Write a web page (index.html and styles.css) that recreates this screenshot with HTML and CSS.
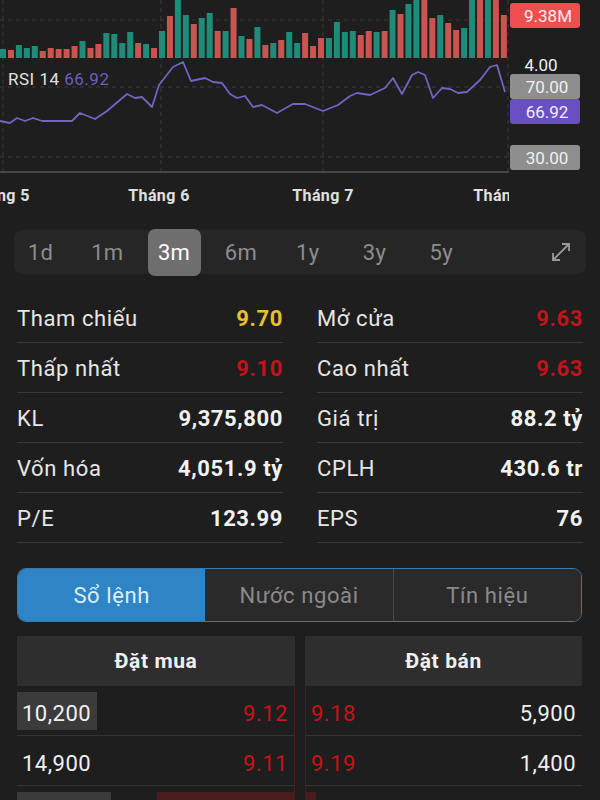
FILE: index.html
```html
<!DOCTYPE html>
<html lang="vi">
<head>
    <meta charset="UTF-8">
    <meta name="viewport" content="width=device-width, initial-scale=1.0">
    <title>Chi tiết cổ phiếu</title>
    <link rel="stylesheet" href="styles.css">
</head>
<body>
    <svg class="chart" width="600" height="210" viewBox="0 0 600 210">
        <defs>
            <clipPath id="plotClip"><rect x="0" y="0" width="509" height="210"/></clipPath>
        </defs>
        <g clip-path="url(#plotClip)">
            <g class="grid">
                <line x1="3" y1="0" x2="3" y2="172"/>
                <line x1="161" y1="0" x2="161" y2="172"/>
                <line x1="323" y1="0" x2="323" y2="172"/>
                <line x1="508" y1="0" x2="508" y2="174"/>
                <line x1="0" y1="20" x2="508" y2="20"/>
                <line x1="0" y1="87" x2="508" y2="87"/>
                <line x1="0" y1="157" x2="508" y2="157"/>
            </g>
            <g id="bars"></g>
            <line class="baseline" x1="0" y1="172" x2="509" y2="172"/>
            <polyline class="rsi" points="0,121 10,123 17,118 25,121 33,118 42,121 72,121 80,113 95,119 107,111 127,94 135,98 142,97 152,107 159,85 173,67 183,62 191,81 205,78 213,82 222,83 230,94 237,98 245,96 253,107 262,105 277,113 293,104 305,104 323,111 338,105 350,96 357,93 370,95 385,88 393,78 402,94 412,75 418,72 425,75 433,98 442,88 450,89 458,93 467,92 480,80 490,67 497,65 505,92"/>
            <text class="rsi-label" x="8" y="85">RSI 14 <tspan class="rsi-value">66.92</tspan></text>
            <text class="month" x="-1" y="201">Tháng 5</text>
            <text class="month" x="159" y="201">Tháng 6</text>
            <text class="month" x="323" y="201">Tháng 7</text>
            <text class="month" x="504" y="201">Tháng 8</text>
        </g>
        <g class="axis">
            <rect class="tag-vol" x="510" y="3" width="70" height="25" rx="3"/>
            <text x="548" y="22">9.38M</text>
            <text x="541" y="71">4.00</text>
            <rect class="tag-grey" x="510" y="74" width="70" height="25" rx="3"/>
            <text x="547" y="93">70.00</text>
            <rect class="tag-rsi" x="510" y="99" width="70" height="25" rx="3"/>
            <text x="547" y="118">66.92</text>
            <rect class="tag-grey" x="510" y="145" width="70" height="25" rx="3"/>
            <text x="547" y="164">30.00</text>
        </g>
    </svg>

    <div class="periods">
        <span class="period">1d</span>
        <span class="period">1m</span>
        <span class="period active">3m</span>
        <span class="period">6m</span>
        <span class="period">1y</span>
        <span class="period">3y</span>
        <span class="period">5y</span>
        <svg class="expand" width="24" height="24" viewBox="0 0 24 24">
            <path d="M4 20 L20 4 M13 4 H20 V11 M4 13 V20 H11"/>
        </svg>
    </div>

    <div class="stats">
        <div class="stat"><span class="label">Tham chiếu</span><span class="value ref">9.70</span></div>
        <div class="stat"><span class="label">Mở cửa</span><span class="value down">9.63</span></div>
        <div class="stat"><span class="label">Thấp nhất</span><span class="value down">9.10</span></div>
        <div class="stat"><span class="label">Cao nhất</span><span class="value down">9.63</span></div>
        <div class="stat"><span class="label">KL</span><span class="value">9,375,800</span></div>
        <div class="stat"><span class="label">Giá trị</span><span class="value">88.2 tỷ</span></div>
        <div class="stat"><span class="label">Vốn hóa</span><span class="value">4,051.9 tỷ</span></div>
        <div class="stat"><span class="label">CPLH</span><span class="value">430.6 tr</span></div>
        <div class="stat"><span class="label">P/E</span><span class="value">123.99</span></div>
        <div class="stat"><span class="label">EPS</span><span class="value">76</span></div>
    </div>

    <div class="tabs">
        <div class="tab active">Sổ lệnh</div>
        <div class="tab">Nước ngoài</div>
        <div class="tab">Tín hiệu</div>
    </div>

    <div class="book">
        <div class="side buy">
            <div class="book-head">Đặt mua</div>
            <div class="level">
                <span class="depth vol" style="width: 80px"></span>
                <span class="qty">10,200</span><span class="price">9.12</span>
            </div>
            <div class="level">
                <span class="qty">14,900</span><span class="price">9.11</span>
            </div>
            <div class="level">
                <span class="depth vol" style="width: 94px"></span>
                <span class="depth hot right" style="width: 137px"></span>
            </div>
        </div>
        <div class="side sell">
            <div class="book-head">Đặt bán</div>
            <div class="level">
                <span class="price">9.18</span><span class="qty">5,900</span>
            </div>
            <div class="level">
                <span class="price">9.19</span><span class="qty">1,400</span>
            </div>
            <div class="level">
                <span class="depth hot" style="width: 10px"></span>
            </div>
        </div>
    </div>

    <script>
        // volume bars: t = up (teal), r = down (red), number = top of bar
        const volumes = "t49 r50 t45 t48 t46 r51 r48 r49 r49 r46 t41 r48 r44 t33 t34 t43 t32 r43 t44 r48 t31 r16 t0 t15 r24 t18 t13 r31 t31 r8 t36 r39 " +
            "t27 r45 t43 r40 t32 t43 r33 r46 r38 t38 t22 t32 t31 r35 r31 t32 r31 t10 r14 t4 t0 r0 r18 t15 r23 r30 t28 t0 r0 t0 r0 r15";
        const group = document.getElementById('bars');
        volumes.split(' ').forEach(function (v, i) {
            const top = parseInt(v.slice(1), 10);
            const rect = document.createElementNS('http://www.w3.org/2000/svg', 'rect');
            rect.setAttribute('x', (i * 7.95).toFixed(2));
            rect.setAttribute('y', top);
            rect.setAttribute('width', 6);
            rect.setAttribute('height', 58 - top);
            rect.setAttribute('class', v[0] === 't' ? 'bar-up' : 'bar-down');
            group.appendChild(rect);
        });
    </script>
</body>
</html>
```

FILE: styles.css
```css
body {
    margin: 0;
    width: 600px;
    background-color: #1e1e1e;
    font-family: Roboto, "Noto Sans", sans-serif;
    color: #e8e8e8;
    overflow: hidden;
}

/* chart */
.chart {
    display: block;
}
.grid line {
    stroke: #3a3a3a;
    stroke-width: 1;
    stroke-dasharray: 4 4;
}
.baseline {
    stroke: #474747;
    stroke-width: 2;
}
.bar-up {
    fill: #1f8c79;
}
.bar-down {
    fill: #c95450;
}
.rsi {
    fill: none;
    stroke: #7463c4;
    stroke-width: 1.8;
    stroke-linejoin: round;
}
.rsi-label {
    font-size: 17px;
    letter-spacing: 0.5px;
    fill: #e2e2e2;
}
.rsi-value {
    fill: #6e5cc2;
}
.month {
    font-size: 16px;
    font-weight: bold;
    letter-spacing: 0.4px;
    fill: #e0e0e0;
    text-anchor: middle;
}
.axis text {
    font-size: 17px;
    fill: #f0f0f0;
    text-anchor: middle;
}
.tag-vol {
    fill: #ee4e4e;
}
.tag-grey {
    fill: #8e8e8e;
}
.tag-rsi {
    fill: #6a4fc2;
}

/* period selector */
.periods {
    display: flex;
    align-items: center;
    gap: 13.8px;
    height: 44px;
    margin: 20px 14px 0 14px;
    background-color: #262626;
    border-radius: 8px;
}
.period {
    width: 53px;
    height: 47px;
    line-height: 47px;
    text-align: center;
    font-size: 22px;
    letter-spacing: 0.3px;
    color: #8d8d8d;
    border-radius: 7px;
}
.period.active {
    background-color: #6e6e6e;
    color: #ffffff;
}
.expand {
    margin-left: auto;
    margin-right: 13px;
}
.expand path {
    fill: none;
    stroke: #9a9a9a;
    stroke-width: 1.8;
}

/* stats */
.stats {
    display: grid;
    grid-template-columns: 266px 266px;
    column-gap: 34px;
    margin-top: 19px;
    padding-left: 17px;
}
.stat {
    display: flex;
    justify-content: space-between;
    align-items: center;
    height: 50px;
    box-sizing: border-box;
    padding-top: 2px;
    border-bottom: 1px solid #3a3a3a;
    font-size: 22px;
    letter-spacing: 0.6px;
}
.label {
    color: #e6e6e6;
}
.value {
    font-weight: bold;
    color: #f2f2f2;
}
.value.ref {
    color: #e8c030;
}
.value.down {
    color: #be141a;
}

/* tabs */
.tabs {
    display: flex;
    width: 565px;
    height: 54px;
    box-sizing: border-box;
    margin: 25px 0 0 17px;
    border: 1.5px solid #3b7bab;
    border-radius: 9px;
    overflow: hidden;
}
.tab {
    flex: 1;
    display: flex;
    align-items: center;
    justify-content: center;
    font-size: 22px;
    letter-spacing: 0.6px;
    color: #8a8a8a;
    background-color: #2a2a2a;
}
.tab + .tab {
    border-left: 1px solid #4a4a4a;
}
.tab.active {
    background-color: #2e84c4;
    color: #dcefff;
}
.tab.active + .tab {
    border-left: none;
}

/* order book */
.book {
    display: grid;
    grid-template-columns: 278px 277px;
    column-gap: 10px;
    margin-top: 14px;
    padding-left: 17px;
}
.book-head {
    height: 50px;
    line-height: 50px;
    text-align: center;
    font-size: 21px;
    font-weight: bold;
    letter-spacing: 0.6px;
    color: #f0f0f0;
    background-color: #2e2e2e;
}
.level {
    position: relative;
    display: flex;
    justify-content: space-between;
    align-items: center;
    height: 50px;
    box-sizing: border-box;
    padding: 6px 6px 0 5px;
    border-bottom: 1px solid #333333;
    font-size: 22px;
    letter-spacing: 0.5px;
}
.buy .level {
    border-right: 1px solid #4e1a1a;
}
.sell .level {
    border-left: 1px solid #3a2222;
}
.depth {
    position: absolute;
    top: 6px;
    bottom: 5px;
    left: 0;
}
.depth.vol {
    background-color: #3b3b3b;
}
.depth.hot {
    background-color: #4a1c1e;
}
.depth.right {
    left: auto;
    right: 0;
}
.qty {
    position: relative;
    color: #f0f0f0;
}
.price {
    position: relative;
    color: #c8121a;
}
```
